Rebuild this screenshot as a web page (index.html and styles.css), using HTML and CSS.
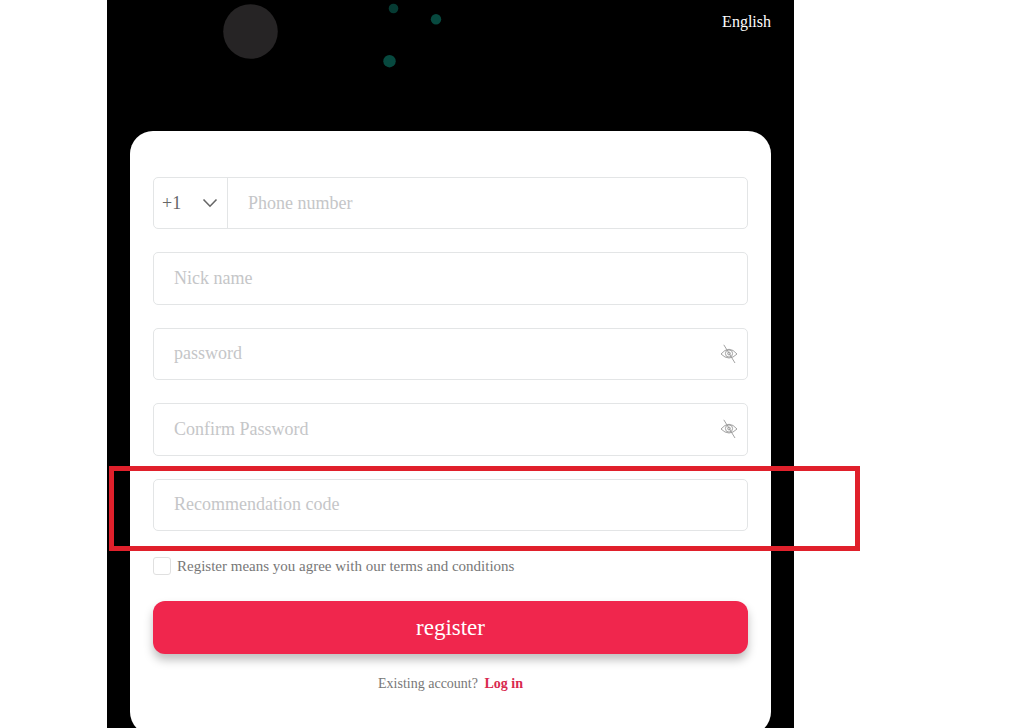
FILE: index.html
```
<!DOCTYPE html>
<html lang="en">
<head>
  <meta charset="UTF-8">
  <meta name="viewport" content="width=device-width, initial-scale=1.0">
  <title>Register</title>
  <link rel="stylesheet" href="styles.css">
</head>
<body>
  <main class="page">
    <header class="top">
      <svg class="bubbles" width="260" height="80" viewBox="0 0 260 80" aria-hidden="true">
        <circle cx="43.5" cy="31.5" r="27.3" fill="#262425"/>
        <circle cx="186.5" cy="8.5" r="4.8" fill="#063b33"/>
        <circle cx="229" cy="19.2" r="5.2" fill="#07493f"/>
        <circle cx="182.5" cy="61.2" r="6.2" fill="#07493f"/>
      </svg>
      <a href="#" class="language">English</a>
    </header>

    <form class="card">
      <div class="fields">
        <div class="field">
          <div class="code">
            <select aria-label="Country code">
              <option>+1</option>
            </select>
            <svg class="arrow" width="16" height="10" viewBox="0 0 16 10" aria-hidden="true">
              <path d="M1.5 1.5L8 8.2L14.5 1.5" fill="none" stroke="#666" stroke-width="1.6"/>
            </svg>
          </div>
          <input type="tel" placeholder="Phone number" aria-label="Phone number">
        </div>
        <div class="field">
          <input type="text" placeholder="Nick name" aria-label="Nick name">
        </div>
        <div class="field">
          <input type="password" placeholder="password" aria-label="password">
          <button type="button" class="eye" aria-label="Show password">
            <svg width="18" height="20" viewBox="0 0 18 20" fill="none" stroke="#999" stroke-width="0.9">
              <path d="M1 10Q9 0.5 17 10Q9 18 1 10Z"/>
              <circle cx="9" cy="9.5" r="3.6"/>
              <circle cx="9" cy="9.5" r="1.4"/>
              <path d="M3.8 0.8L15 19"/>
            </svg>
          </button>
        </div>
        <div class="field">
          <input type="password" placeholder="Confirm Password" aria-label="Confirm Password">
          <button type="button" class="eye" aria-label="Show password">
            <svg width="18" height="20" viewBox="0 0 18 20" fill="none" stroke="#999" stroke-width="0.9">
              <path d="M1 10Q9 0.5 17 10Q9 18 1 10Z"/>
              <circle cx="9" cy="9.5" r="3.6"/>
              <circle cx="9" cy="9.5" r="1.4"/>
              <path d="M3.8 0.8L15 19"/>
            </svg>
          </button>
        </div>
        <div class="field marked">
          <input type="text" placeholder="Recommendation code" aria-label="Recommendation code">
        </div>
      </div>

      <label class="terms">
        <input type="checkbox">
        Register means you agree with our terms and conditions
      </label>

      <button type="submit" class="register">register</button>

      <p class="login">Existing account? <a href="#">Log in</a></p>
    </form>
  </main>
</body>
</html>
```
FILE: styles.css
```
* {
  box-sizing: border-box;
}
body {
  margin: 0;
  padding: 0 230px 0 107px;
  background: white;
  font-family: "Liberation Serif", "Times New Roman", serif;
}
.page {
  min-height: 100vh;
  padding: 0 23px 23px;
  background: black;
}
.top {
  display: flex;
  justify-content: space-between;
  align-items: flex-start;
  height: 131px;
  padding-left: 77px;
}
.language {
  margin-top: 12px;
  color: white;
  font-size: 16px;
  line-height: 20px;
  text-decoration: none;
}
.card {
  padding: 46px 23px 42px;
  background: white;
  border-radius: 23px;
}
.fields {
  display: grid;
  grid-auto-rows: 1fr;
  gap: 23px;
  min-height: 354px;
}
.field {
  display: flex;
  align-items: center;
  position: relative;
  border: 1px solid #e3e5e6;
  border-radius: 5px;
}
.field input {
  flex: 1;
  align-self: stretch;
  min-width: 0;
  padding: 0 20px;
  border: none;
  background: none;
  outline: none;
  color: #666;
  font-family: inherit;
  font-size: 18px;
}
.field input::placeholder {
  color: #c5c6c8;
}
.code {
  display: flex;
  align-items: center;
  align-self: stretch;
  width: 74px;
  padding: 0 9px 0 8px;
  border-right: 1px solid #e3e5e6;
}
.code select {
  flex: 1;
  min-width: 0;
  padding: 0;
  border: none;
  background: none;
  appearance: none;
  color: #666;
  font-family: inherit;
  font-size: 18px;
}
.eye {
  display: flex;
  padding: 0 9px;
  border: none;
  background: none;
  cursor: pointer;
}
/* red frame around the recommendation code */
.marked::after {
  content: "";
  position: absolute;
  top: -14px;
  right: -113px;
  bottom: -21px;
  left: -45px;
  border: 5px solid #e0202b;
  pointer-events: none;
}
.terms {
  display: flex;
  align-items: center;
  gap: 6px;
  margin-top: 26px;
  color: #777;
  font-size: 15px;
  line-height: 18px;
}
.terms input {
  width: 18px;
  height: 18px;
  margin: 0;
  border: 1px solid #e0e0e0;
  border-radius: 3px;
  appearance: none;
}
.register {
  display: block;
  width: 100%;
  height: 53px;
  margin-top: 26px;
  border: none;
  border-radius: 12px;
  background: #f0264d;
  box-shadow: 0 6px 10px rgba(0, 0, 0, 0.25);
  color: white;
  font-family: inherit;
  font-size: 23px;
  cursor: pointer;
}
.login {
  margin: 21px 0 0;
  color: #777;
  font-size: 14px;
  line-height: 18px;
  text-align: center;
}
.login a {
  margin-left: 3px;
  color: #d9294f;
  font-weight: bold;
  text-decoration: none;
}
```
